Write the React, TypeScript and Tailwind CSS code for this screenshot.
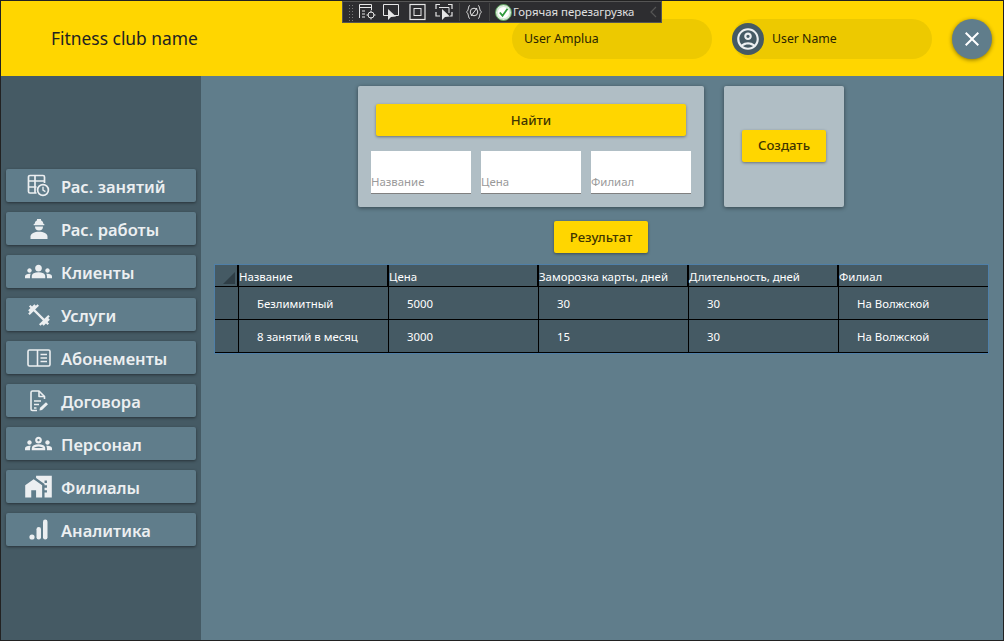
import React from 'react';
import { MdGroups, MdOutlineGroups, MdFitnessCenter, MdHomeWork, MdOutlineAccountCircle, MdClose } from 'react-icons/md';

const ScheduleIcon = () => (
  <svg width="23" height="23" viewBox="0 0 23 23" fill="none" stroke="currentColor" strokeWidth="1.7">
    <path d="M9.5 19H3a1.5 1.5 0 0 1-1.500-1.500V3A1.500 1.500 0 0 1 3 1.500h13A1.500 1.500 0 0 1 17.500 3v6" />
    <path d="M1.500 7h16M1.500 13h8M8 1.500V19" />
    <circle cx="16" cy="16" r="5.400" />
    <path d="M16 12.800V16.200l2.400 1.400" strokeWidth="1.400" />
  </svg>
);

const WorkerIcon = () => (
  <svg width="20" height="22" viewBox="0 0 20 22" fill="currentColor">
    <path d="M5.500 6A4.700 4.700 0 0 1 8 2.200V1h4v1.200A4.700 4.700 0 0 1 14.500 6h.8v1.300H4.700V6z" />
    <path d="M6 8.500h8a4 4 0 0 1-8 0z" />
    <path d="M1.500 21v-2.500c0-3 4-4.700 8.500-4.700s8.500 1.700 8.500 4.700V21z" />
  </svg>
);

const BookIcon = () => (
  <svg width="24" height="18" viewBox="0 0 24 18" fill="none" stroke="currentColor" strokeWidth="1.600">
    <rect x="1" y="1" width="22" height="16" rx="1.500" />
    <path d="M10.500 1v16" />
    <path d="M13.500 5.500h6.500M13.500 9h6.500M13.500 12.500h6.500" strokeWidth="1.300" />
  </svg>
);

const ContractIcon = () => (
  <svg width="20" height="22" viewBox="0 0 20 22" fill="none" stroke="currentColor" strokeWidth="1.600" strokeLinejoin="round">
    <path d="M8 20.500H3.500A1.500 1.500 0 0 1 2 19V2.500A1.500 1.500 0 0 1 3.500 1H10l5.500 5.500V9" />
    <path d="M10 1v5.500h5.500" />
    <path d="M5 11h7M5 14.500h5M5 18h2.500" strokeWidth="1.400" />
    <path d="M10.500 20.500l.5-2.800 6-5.500 2 2-6 5.800z" fill="currentColor" stroke="none" />
  </svg>
);

const AnalyticsIcon = () => (
  <svg width="19" height="21" viewBox="0 0 19 21" fill="currentColor">
    <circle cx="3" cy="18" r="2.600" />
    <rect x="7.500" y="8" width="4.500" height="12.500" rx="2.200" />
    <rect x="14" y="0.500" width="4.500" height="20" rx="2.200" />
  </svg>
);

const menuItems = [
  { label: 'Рас. занятий', icon: <ScheduleIcon /> },
  { label: 'Рас. работы', icon: <WorkerIcon /> },
  { label: 'Клиенты', icon: <MdGroups size={27} /> },
  { label: 'Услуги', icon: <MdFitnessCenter size={26} /> },
  { label: 'Абонементы', icon: <BookIcon /> },
  { label: 'Договора', icon: <ContractIcon /> },
  { label: 'Персонал', icon: <MdOutlineGroups size={27} /> },
  { label: 'Филиалы', icon: <MdHomeWork size={29} /> },
  { label: 'Аналитика', icon: <AnalyticsIcon /> },
];

const columns = ['Название', 'Цена', 'Заморозка карты, дней', 'Длительность, дней', 'Филиал'];

const rows = [
  ['Безлимитный', '5000', '30', '30', 'На Волжской'],
  ['8 занятий в месяц', '3000', '15', '30', 'На Волжской'],
];

const DevToolbar = () => (
  <div className="absolute left-[341px] top-0 z-10 flex h-[22px] w-[320px] items-center border border-[#555] bg-[#2d2d30] text-[#e6e6e6]">
    <div className="ml-[5px] h-[17px] w-[7px] shrink-0 bg-[radial-gradient(#777_1px,transparent_1px)] bg-[length:3px_3px]" />
    <svg className="ml-[3px] shrink-0" width="137" height="20" viewBox="0 0 137 20" fill="none" stroke="currentColor" strokeWidth="1">
      <path d="M1.500 16V2.500h12V8M1.500 5.500h12M4 9h3M4 12h3M4 15h3" />
      <circle cx="13" cy="13" r="3" />
      <path d="M13 8.500v2M13 15.500v2M8.500 13h2M15.500 13h2" />
      <path d="M30 13.500h-4.500V2.500h15v11h-5" />
      <path d="M30 7l0 11 3-3 5-.5z" fill="currentColor" stroke="none" />
      <rect x="52" y="2.500" width="15" height="15" strokeWidth="1.200" />
      <rect x="56" y="6.500" width="7" height="7" />
      <path d="M78 7V2.500h4M90 2.500h4V7M78 10v4h4M94 10v4h-2" strokeWidth="1.200" />
      <path d="M81 5.500h10v5.500" />
      <path d="M84 7l0 11 3-3 5-.5z" fill="currentColor" stroke="none" />
      <path d="M101.500 1v18" stroke="#444" />
      <path d="M112 3.500c-2 0-1 5-3.500 6.500 2.500 1.500 1.500 6.500 3.500 6.500M120 3.500c2 0 1 5 3.500 6.500-2.500 1.500-1.500 6.500-3.500 6.500" />
      <circle cx="116" cy="10" r="3.800" />
      <path d="M113 14l6-8" />
      <path d="M131.500 1v18" stroke="#444" />
    </svg>
    <svg className="shrink-0" width="17" height="17" viewBox="0 0 17 17">
      <circle cx="8.500" cy="8.500" r="8" fill="#d8ead8" stroke="#5a9e5a" />
      <circle cx="8.500" cy="8.500" r="5.600" fill="#fff" />
      <path d="M4.800 8.500l2.700 3.200 5-7" fill="none" stroke="#2f9a3c" strokeWidth="1.800" />
    </svg>
    <span className="ml-px whitespace-nowrap text-[11.400px] text-[#e0e0e0]">Горячая перезагрузка</span>
    <svg className="ml-[16px] shrink-0" width="7" height="12" viewBox="0 0 7 12" fill="none" stroke="#555" strokeWidth="1.200">
      <path d="M6 1L1 6l5 5" />
    </svg>
  </div>
);

const YellowButton = ({ label, className }: { label: string; className: string }) => (
  <button className={`flex items-center justify-center rounded-[2px] bg-[#ffd600] pt-px text-[13.200px] font-medium text-[#3f3500] shadow-[0_1px_3px_rgba(0,0,0,0.4)] ${className}`}>
    {label}
  </button>
);

const SearchField = ({ label }: { label: string }) => (
  <div className="flex h-[43px] w-[100px] items-end border-b border-[#808080] bg-white pb-[3px] text-[11.400px] leading-[16px] text-[#9a9a9a]">
    <span>{label}</span>
  </div>
);

const App: React.FC = () => {
  return (
    <div className="relative flex h-[641px] w-[1004px] flex-col overflow-hidden border border-[#222] font-['Noto_Sans','Open_Sans',sans-serif]">
      <DevToolbar />

      <header className="flex h-[75px] shrink-0 items-center bg-[#ffd600] shadow-[0_1px_3px_rgba(0,0,0,0.3)]">
        <div className="ml-[50px] w-[461px] text-[17.400px] text-[#222]">Fitness club name</div>
        <div className="flex h-10 w-[200px] items-center rounded-[20px] bg-[#edc900] pl-3 pt-[2px] text-[12.300px] text-[#2a2400]">User Amplua</div>
        <div className="ml-5 flex h-10 w-[200px] items-center rounded-[20px] bg-[#edc900] text-[12.300px] text-[#2a2400]">
          <div className="flex h-8 w-8 items-center justify-center rounded-full bg-[#455a64] text-[#eceff1]">
            <MdOutlineAccountCircle size={26} />
          </div>
          <span className="ml-2 pt-[2px]">User Name</span>
        </div>
        <button className="ml-5 flex h-10 w-10 items-center justify-center rounded-full bg-[#607d8b] text-white shadow-[0_1px_4px_rgba(0,0,0,0.45)]">
          <MdClose size={24} />
        </button>
      </header>

      <div className="flex min-h-0 flex-1">
        <aside className="flex w-[200px] shrink-0 flex-col gap-[10px] bg-[#455a64] px-[5px] pt-[93px]">
          {menuItems.map((item) => (
            <button
              key={item.label}
              className="flex h-[33px] w-[190px] items-center rounded-[2px] bg-[#607d8b] text-[#eceff1] shadow-[0_1px_3px_rgba(0,0,0,0.45)]"
            >
              <span className="flex w-[55px] shrink-0 items-center justify-center pl-[10px]">{item.icon}</span>
              <span className="pt-[3px] text-[16.500px] font-semibold leading-none">{item.label}</span>
            </button>
          ))}
        </aside>

        <main className="flex min-w-0 flex-1 flex-col items-start bg-[#607d8b] pl-[13px] pt-[10px]">
          <div className="ml-[144px] flex gap-5">
            <section className="flex h-[121px] w-[346px] flex-col items-center rounded-[2px] bg-[#b0bec5] pt-[18px] shadow-[0_1px_4px_rgba(0,0,0,0.45)]">
              <YellowButton label="Найти" className="h-8 w-[310px]" />
              <div className="mt-[15px] flex gap-[10px]">
                <SearchField label="Название" />
                <SearchField label="Цена" />
                <SearchField label="Филиал" />
              </div>
            </section>
            <section className="flex h-[121px] w-[120px] items-center justify-center rounded-[2px] bg-[#b0bec5] pb-[2px] shadow-[0_1px_4px_rgba(0,0,0,0.45)]">
              <YellowButton label="Создать" className="h-8 w-[84px]" />
            </section>
          </div>

          <YellowButton label="Результат" className="ml-[340px] mt-[14px] h-8 w-[94px] pt-[3px]" />

          <div className="mt-[11px] w-[775px] border border-[#4f7fa8] bg-[#455a64] text-[11.400px] text-white">
            <div className="flex h-[22px] border-b border-black">
              <div className="relative w-[24px] shrink-0 border-r-2 border-black">
                <div className="absolute bottom-[2px] right-[2px] h-0 w-0 border-b-[12px] border-l-[12px] border-b-[#2f3e46] border-l-transparent" />
              </div>
              {columns.map((col) => (
                <div key={col} className="flex w-[150px] shrink-0 items-center whitespace-nowrap border-r-2 border-black pt-[2px] leading-none last:border-r-0">
                  {col}
                </div>
              ))}
            </div>
            {rows.map((row) => (
              <div key={row[0]} className="flex h-[33px] border-b border-black">
                <div className="w-[24px] shrink-0 border-r border-black" />
                {row.map((cell, i) => (
                  <div key={i} className="flex w-[150px] shrink-0 items-center border-r border-black pl-[18px] pt-[2px] last:border-r-0">
                    {cell}
                  </div>
                ))}
              </div>
            ))}
          </div>
        </main>
      </div>
    </div>
  );
};

export default App;
